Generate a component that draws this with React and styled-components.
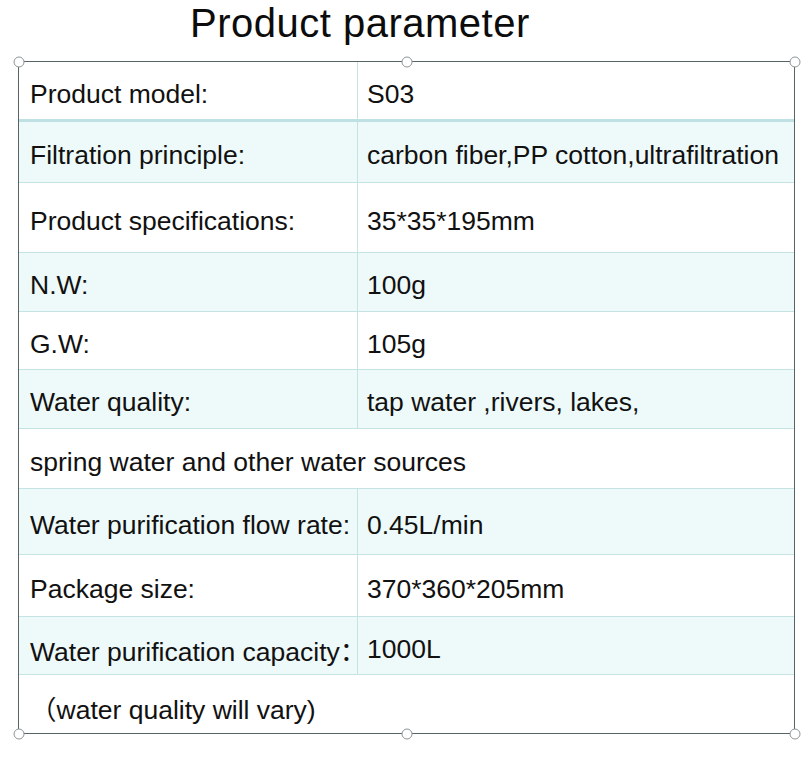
import React from 'react'
import styled, { createGlobalStyle } from 'styled-components'

const GlobalStyle = createGlobalStyle`
    html, body {
        margin: 0;
        padding: 0;
        background: #ffffff;
    }
    body {
        font-family: "Liberation Sans", "Noto Sans CJK SC", sans-serif;
        color: #111;
    }
`

const Page = styled.div`
    width: 807px;
    height: 759px;
    display: flex;
    flex-direction: column;
`

const Title = styled.h1`
    margin: 0 0 15px 190px;
    font-size: 40px;
    line-height: 46px;
    font-weight: 400;
    letter-spacing: 0.5px;
    color: #0c0c0c;
`

const Frame = styled.div`
    position: relative;
    margin-left: 18px;
    width: 777px;
    box-sizing: border-box;
    border: 1px solid #566464;
    display: flex;
    flex-direction: column;
`

const Row = styled.div`
    display: grid;
    grid-template-columns: ${(p) => (p.$span ? '1fr' : '339px 1fr')};
    height: ${(p) => p.$h}px;
    box-sizing: border-box;
    background: ${(p) => (p.$tint ? '#eef9f9' : '#ffffff')};
    border-bottom: ${(p) => (p.$last ? 'none' : p.$thick ? '3px solid #c0e1e3' : '1px solid #c6e3e3')};
`

const Cell = styled.div`
    display: flex;
    align-items: center;
    box-sizing: border-box;
    padding-top: 7px;
    padding-left: ${(p) => (p.$value ? '9px' : '11px')};
    border-right: ${(p) => (p.$divider ? '1px solid #c6e3e3' : 'none')};
    font-size: 26.5px;
    white-space: nowrap;
    color: #111;
`

const Handle = styled.span`
    position: absolute;
    width: 11px;
    height: 11px;
    box-sizing: border-box;
    border-radius: 50%;
    border: 1px solid #8f9595;
    background: #ffffff;
    left: ${(p) => p.$x};
    top: ${(p) => p.$y};
    transform: translate(-50%, -50%);
`

const rows = [
    { h: 60, label: 'Product model:', value: 'S03', thick: true },
    { h: 61, label: 'Filtration principle:', value: 'carbon fiber,PP cotton,ultrafiltration', tint: true },
    { h: 70, label: 'Product specifications:', value: '35*35*195mm' },
    { h: 59, label: 'N.W:', value: '100g', tint: true },
    { h: 58, label: 'G.W:', value: '105g' },
    { h: 59, label: 'Water quality:', value: 'tap water ,rivers, lakes,', tint: true },
    { h: 60, label: 'spring water and other water sources', span: true },
    { h: 66, label: 'Water purification flow rate:', value: '0.45L/min', tint: true },
    { h: 62, label: 'Package size:', value: '370*360*205mm' },
    { h: 58, label: 'Water purification capacity：', value: '1000L', tint: true },
    { h: 58, label: '（water quality will vary)', span: true, last: true },
]

const handles = [
    ['-0.5px', '-0.5px'],
    ['388px', '-0.5px'],
    ['776px', '-0.5px'],
    ['-0.5px', '671.5px'],
    ['388px', '671.5px'],
    ['776px', '671.5px'],
]

export default function App() {
    return (
        <Page>
            <GlobalStyle />
            <Title>Product parameter</Title>
            <Frame>
                {rows.map((r, i) => (
                    <Row key={i} $h={r.h} $tint={r.tint} $thick={r.thick} $last={r.last} $span={r.span}>
                        <Cell $divider={!r.span}>{r.label}</Cell>
                        {!r.span && <Cell $value>{r.value}</Cell>}
                    </Row>
                ))}
                {handles.map(([x, y], i) => (
                    <Handle key={i} $x={x} $y={y} />
                ))}
            </Frame>
        </Page>
    )
}
